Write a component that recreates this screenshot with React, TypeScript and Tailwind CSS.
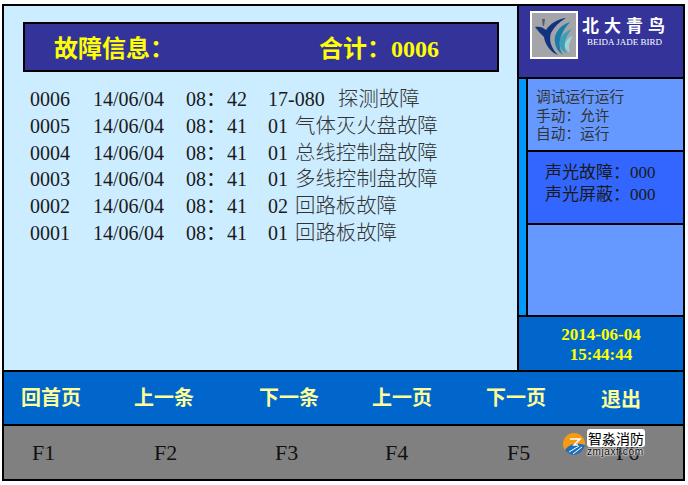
const cjk = '"Liberation Serif","Noto Sans CJK SC",serif';

const rows = [
  ["0006", "14/06/04", "08：", "42", "17-080", "探测故障", "w-[70px]"],
  ["0005", "14/06/04", "08：", "41", "01", "气体灭火盘故障", "w-[27px]"],
  ["0004", "14/06/04", "08：", "41", "01", "总线控制盘故障", "w-[27px]"],
  ["0003", "14/06/04", "08：", "41", "01", "多线控制盘故障", "w-[27px]"],
  ["0002", "14/06/04", "08：", "41", "02", "回路板故障", "w-[27px]"],
  ["0001", "14/06/04", "08：", "41", "01", "回路板故障", "w-[27px]"],
];

const keys = [
  ["回首页", "F1", "w-[116px]", "pl-[17px]"],
  ["上一条", "F2", "w-[124px]", "pl-[14px]"],
  ["下一条", "F3", "w-[113px]", "pl-[15px]"],
  ["上一页", "F4", "w-[114px]", "pl-[15px]"],
  ["下一页", "F5", "w-[114px]", "pl-[15px]"],
  ["退出", "F6", "w-[80px]", "pl-[16px]"],
];

function Bird() {
  return (
    <svg viewBox="0 0 48 48" className="w-[48px] h-[48px] shrink-0">
      <rect width="48" height="48" fill="#ffffff" />
      <rect x="2" y="2" width="44" height="44" fill="#a3a5a8" />
      <path d="M12 8 L15 8 L14 15 L13 15 Z" fill="#555a60" />
      <path d="M5 16 C9 15 13 16 16 19 C20 13 27 8 36 7 C29 11 24 16 21 22 C19 28 20 36 28 44 C20 41 15 33 14 26 C11 23 8 20 5 16 Z" fill="#14337f" />
      <path d="M40 11 C30 14 23 23 25 32 C26 38 29 41 33 44 C27 35 29 23 40 11 Z" fill="#1d7ba8" />
      <path d="M42 18 C34 21 28 27 30 35 C31 39 34 41 37 43 C33 36 34 27 42 18 Z" fill="#3aa0b8" />
      <path d="M43 25 C38 27 34 31 35 36 C36 39 38 40 40 41 C38 36 39 31 43 25 Z" fill="#9ed3d8" />
    </svg>
  );
}

export default function App() {
  return (
    <div className="relative w-[688px] h-[485px] bg-white pt-[4px] pl-[2px]" style={{ fontFamily: cjk }}>
      <div className="w-[683px] h-[477px] border-2 border-black flex flex-col bg-[#ccecff]">
        <div className="flex h-[366px] border-b-2 border-black">
          <div className="w-[513px] bg-[#ccecff] pl-[19px] pt-[16px]">
            <div className="w-[476px] h-[50px] bg-[#333399] border-2 border-black flex items-center pt-[3px] font-bold text-[#ffff00] text-[24px]">
              <span className="w-[294px] pl-[29px]">故障信息：</span>
              <span>合计：0006</span>
            </div>
            <div className="mt-[14px] ml-[7px] text-[20px] text-[#1a1a1a]">
              {rows.map((r) => (
                <div key={r[0]} className="flex h-[26.8px] leading-[26.8px]">
                  <span className="w-[63px]">{r[0]}</span>
                  <span className="w-[93px]">{r[1]}</span>
                  <span className="w-[41px]">{r[2]}</span>
                  <span className="w-[41px]">{r[3]}</span>
                  <span className={r[6]}>{r[4]}</span>
                  <span className="text-[#333333] text-[20.4px] font-light">{r[5]}</span>
                </div>
              ))}
            </div>
          </div>
          <div className="w-[166px] border-l-2 border-black flex flex-col">
            <div className="h-[73px] bg-[#333399] border-b-2 border-black flex pl-[11px] pt-[5px] gap-[4px]">
              <Bird />
              <div className="text-white pt-[6px]">
                <div className="text-[17px] leading-[20px] font-bold tracking-[5px] whitespace-nowrap">北大青鸟</div>
                <div className="text-[9px] leading-[10px] ml-[5px] whitespace-nowrap">BEIDA JADE BIRD</div>
              </div>
            </div>
            <div className="flex h-[238px] border-b-2 border-black">
              <div className="w-[7px] bg-[#0099ff] border-r-2 border-black box-content" />
              <div className="flex-1 flex flex-col text-[#333333]">
                <div className="h-[73px] bg-[#6699ff] border-b-2 border-black pl-[8px] pt-[9px] text-[14.7px] leading-[18.5px]">
                  <div>调试运行运行</div>
                  <div>手动：允许</div>
                  <div>自动：运行</div>
                </div>
                <div className="h-[73px] bg-[#3366ff] border-b-2 border-black pl-[17px] pt-[10px] text-[17px] leading-[22px] text-[#1a1a1a]">
                  <div>声光故障：000</div>
                  <div>声光屏蔽：000</div>
                </div>
                <div className="flex-1 bg-[#6699ff]" />
              </div>
            </div>
            <div className="flex-1 bg-[#0066cc] text-[#ffff00] font-bold text-[17px] leading-[20px] flex flex-col items-center justify-center pt-[2px]">
              <div>2014-06-04</div>
              <div>15:44:44</div>
            </div>
          </div>
        </div>
        <div className="h-[54px] bg-[#0066cc] border-b-2 border-black flex items-center text-[#ffff99] text-[20px] font-bold">
          {keys.map((k) => (
            <span key={k[1]} className={`${k[2]} ${k[3]} ${k[1] === "F6" ? "pt-[4px]" : ""}`}>{k[0]}</span>
          ))}
        </div>
        <div className="flex-1 bg-[#808080] flex items-center text-[22px] text-[#111111]">
          <span className="w-[123px] pl-[28px]">F1</span>
          <span className="w-[121px] pl-[27px]">F2</span>
          <span className="w-[110px] pl-[27px]">F3</span>
          <span className="w-[122px] pl-[27px]">F4</span>
          <span className="w-[136px] pl-[27px]">F5</span>
          <span>F6</span>
        </div>
      </div>
      <div className="absolute left-[563px] top-[429px] flex items-start gap-[2px]">
        <svg viewBox="0 0 22 22" className="w-[22px] h-[22px] mt-[4px]">
          <circle cx="11" cy="11" r="11" fill="#f59a12" />
          <path d="M2 17 C7 10 15 10 22 12 C21 18 16 22 11 22 C7 22 4 20 2 17 Z" fill="#1f6fb8" />
          <path d="M6 19 L16 13 M10 21 L19 14" stroke="#ffffff" strokeWidth="1" />
          <path d="M7 6 H17 L11 12 H15" stroke="#ffffff" strokeWidth="1.5" fill="none" />
        </svg>
        <div className="flex flex-col">
          <span className="bg-white rounded-[3px] px-[1px] text-[14px] leading-[18px] text-black whitespace-nowrap" style={{ fontFamily: '"Noto Sans CJK SC",sans-serif' }}>智淼消防</span>
          <span className="text-[10px] leading-[9px] tracking-[0.6px] text-black w-fit [text-shadow:0_0_2px_#ffffff,0_0_2px_#ffffff,0_0_2px_#ffffff]" style={{ fontFamily: '"Liberation Sans",sans-serif' }}>zmjaxf.com</span>
        </div>
      </div>
    </div>
  );
}
